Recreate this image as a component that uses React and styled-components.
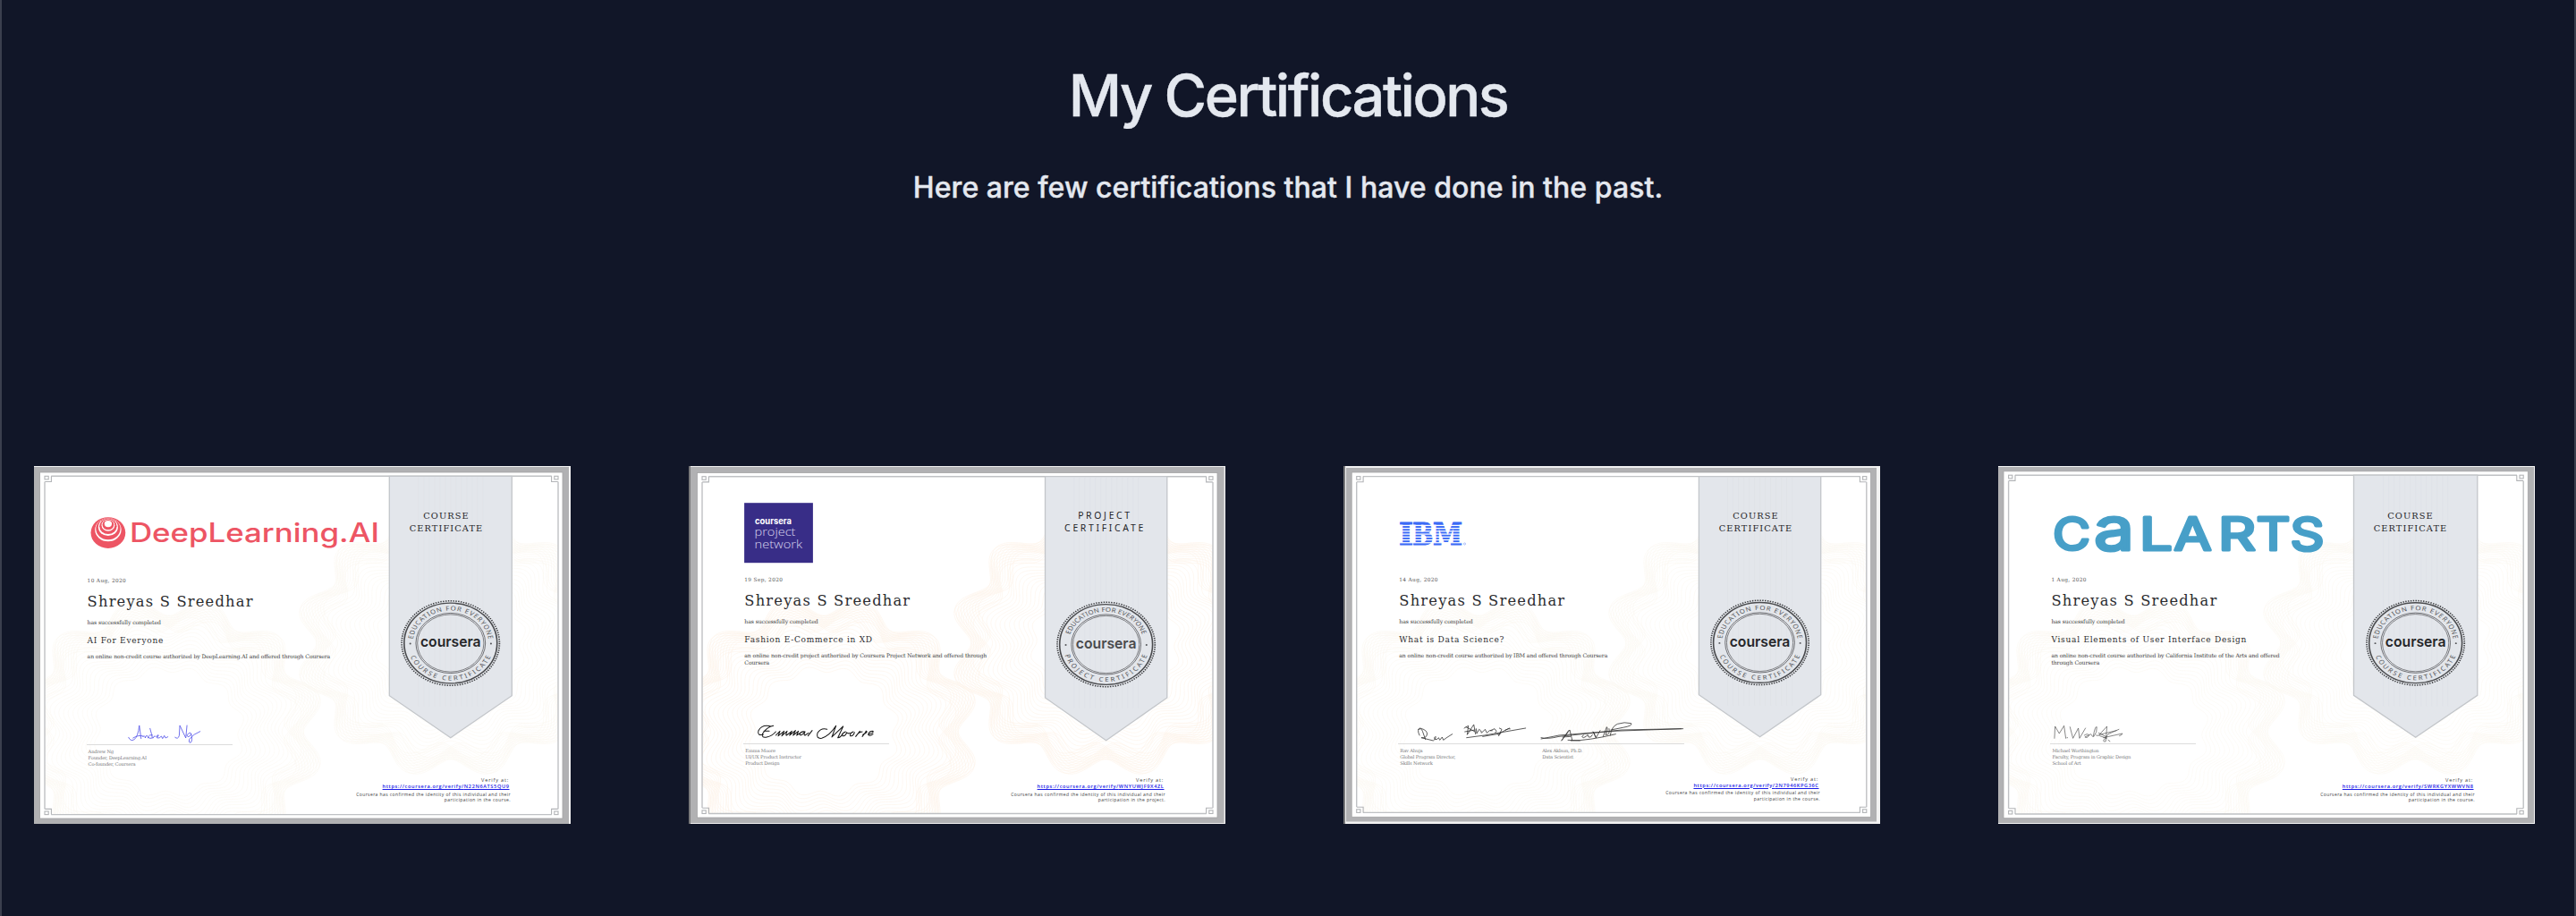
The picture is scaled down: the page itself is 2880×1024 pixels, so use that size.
import React from "react";
import styled, { createGlobalStyle } from "styled-components";

const GlobalStyle = createGlobalStyle`
  body { margin: 0; background: #111628; }
`;

const Page = styled.main`
  box-sizing: border-box;
  height: 1024px;
  padding-top: 67px;
  background: #111628;
  border-left: 2px solid #3b3f4e;
  border-right: 2px solid #3b3f4e;
  color: #e4e8ef;
  font-family: Inter, "Liberation Sans", sans-serif;
`;

const Heading = styled.h1`
  margin: 0;
  font-size: 65px;
  line-height: 80px;
  font-weight: 500;
  letter-spacing: -2.5px;
  text-align: center;
  -webkit-text-stroke: 0.4px currentColor;
`;

const Subheading = styled.p`
  margin: 43px 0 0;
  font-size: 32px;
  line-height: 40px;
  font-weight: 500;
  letter-spacing: 0.05px;
  text-align: center;
  -webkit-text-stroke: 0.4px currentColor;
`;

const Gallery = styled.section`
  display: flex;
  gap: 132px;
  margin-top: 291px;
  padding-left: 36px;
`;

const Frame = styled.article`
  box-sizing: border-box;
  position: relative;
  flex: none;
  width: 600px;
  height: 400px;
  padding: 7px 8px 6px 0;
  overflow: hidden;
  background: #fff;
  color: #3c3d40;
  font-family: "DejaVu Serif", serif;
`;

const Artwork = styled.svg`
  position: absolute;
  inset: 0;
  width: 600px;
  height: 400px;
`;

const Sheet = styled.div`
  position: relative;
  display: grid;
  grid-template-columns: 397px 137px;
  grid-template-rows: ${(p) => 341 + p.$footerShift}px auto;
`;

const Details = styled.div`
  display: flex;
  flex-direction: column;
  padding-left: ${(p) => p.$x}px;
`;

const Logo = styled.svg`
  flex: none;
  display: block;
  width: 337px;
  height: 115px;
  overflow: visible;
`;

const IssueDate = styled.time`
  margin-top: ${(p) => p.$shift}px;
  font-size: 5.8px;
  line-height: 10px;
  letter-spacing: 0.35px;
  color: #555;
`;

const Holder = styled.h2`
  margin: 8px 0 0;
  font-size: 16.3px;
  line-height: 22px;
  font-weight: 400;
  letter-spacing: 1.2px;
  color: #2b2c2f;
  white-space: nowrap;
`;

const Small = styled.p`
  margin: 7px 0 0;
  font-size: 6.2px;
  line-height: 10px;
  letter-spacing: -0.12px;
`;

const Title = styled.h3`
  margin: 7.5px 0 0;
  font-size: 9px;
  line-height: 14px;
  font-weight: 400;
  letter-spacing: 0.75px;
  color: #2b2c2f;
  white-space: nowrap;
`;

const Description = styled.p`
  height: 17px;
  margin: 7.5px 0 0;
  font-size: 6.1px;
  line-height: 8.3px;
  letter-spacing: -0.08px;
  white-space: pre;
`;

const Signers = styled.div`
  display: flex;
  margin: 59.5px 0 0 -1px;
`;

const Signer = styled.div`
  flex: none;
  width: ${(p) => p.$width}px;
`;

const Signature = styled.svg`
  display: block;
  width: 100%;
  height: 25px;
  overflow: visible;
  border-bottom: 1px solid #dcdcdc;
  fill: none;
  stroke-linecap: round;
  stroke-linejoin: round;
`;

const SignerText = styled.p`
  margin: 4px 0 0 2px;
  font-size: 5.2px;
  line-height: 7px;
  letter-spacing: -0.18px;
  color: #77787a;
  white-space: pre;
`;

const RibbonLabel = styled.div`
  box-sizing: border-box;
  padding: 42px ${(p) => (p.$sans ? 0 : 9)}px 0 0;
  font-family: ${(p) => (p.$sans ? '"Noto Sans", sans-serif' : "inherit")};
  font-size: ${(p) => (p.$sans ? 10.4 : 9.8)}px;
  line-height: 13.5px;
  letter-spacing: ${(p) => (p.$sans ? 2.7 : 1.1)}px;
  text-align: center;
  color: #232427;
`;

const Verification = styled.footer`
  grid-column: 1 / -1;
  display: flex;
  flex-direction: column;
  align-items: flex-end;
  padding-right: 1px;
  font-family: "Open Sans", "Noto Sans", sans-serif;
  font-size: 5.6px;
  line-height: 7px;
  white-space: pre;
`;

const VerifyLabel = styled.span`
  padding-right: 2px;
  letter-spacing: 0.8px;
`;

const VerifyLink = styled.a`
  padding-right: 1.5px;
  line-height: 6.5px;
  font-weight: 600;
  letter-spacing: 0.62px;
  color: #1a1ae6;
  text-decoration: underline;
`;

const FinePrint = styled.p`
  margin: 2px 0 0;
  font-size: 5px;
  line-height: 6.8px;
  letter-spacing: 0.42px;
  text-align: right;
`;

/* One closed twelve-lobed curve of the security pattern. */
function rosette(cx, cy, radius, depth, phase) {
  let d = "";
  for (let i = 0; i <= 288; i += 1) {
    const a = (i / 288) * Math.PI * 2;
    const r = radius * (1 - depth * Math.cos(12 * a + phase));
    const x = cx + Math.sin(a) * r * 1.157;
    const y = cy - Math.cos(a) * r;
    d += `${i ? "L" : "M"}${x.toFixed(1)} ${y.toFixed(1)}`;
  }
  return `${d}Z`;
}

function Rosette({ cx, cy, color }) {
  const curves = [];
  for (let i = 0; i < 9; i += 1) {
    curves.push(rosette(cx, cy, 140 - i * 2.4, 0.075, 0.15 + i * 0.1));
    curves.push(rosette(cx, cy, 140 - i * 2.4, 0.075, -0.15 - i * 0.1));
  }
  for (let i = 0; i < 13; i += 1) {
    curves.push(rosette(cx, cy, 118 - i * 4, 0.075 - i * 0.002, Math.sin(i / 2.5) * 0.5));
  }
  return (
    <g fill="none" stroke={color} strokeWidth="0.55">
      {curves.map((d) => (
        <path key={d} d={d} />
      ))}
    </g>
  );
}

function Seal({ id, cx, cy, lower, old }) {
  return (
    <g transform={`translate(${cx} ${cy}) scale(1.157 1)`} fill="none" stroke="#4a4b4e">
      <circle r="47.2" strokeWidth="1.5" strokeDasharray="1.25 1.216" stroke="#3d3e41" />
      <circle r="44.9" strokeWidth="1.4" />
      <circle r="33.6" strokeWidth="0.7" />
      <circle r="32.1" strokeWidth="0.6" />
      <path id={`${id}-up`} d="M-36.6 0A36.6 36.6 0 0 1 36.6 0" stroke="none" />
      <path id={`${id}-down`} d="M-41.6 0A41.6 41.6 0 0 0 41.6 0" stroke="none" />
      <g fill="#55565a" stroke="none" fontFamily="Noto Sans, sans-serif" fontSize="6.8" textAnchor="middle">
        <text textLength={old ? 92 : 106}>
          <textPath href={`#${id}-up`} startOffset="50%" textLength={old ? 92 : 106}>EDUCATION FOR EVERYONE</textPath>
        </text>
        <text textLength={old ? 106 : 100}>
          <textPath href={`#${id}-down`} startOffset="50%" textLength={old ? 106 : 100}>{lower}</textPath>
        </text>
        <circle cx="-39" cy="0.5" r="0.9" />
        <circle cx="39" cy="0.5" r="0.9" />
      </g>
      <text
        x="0"
        y="4.2"
        fill={old ? "#4a4b4e" : "#26272a"}
        stroke="none"
        fontFamily="Inter, sans-serif"
        fontWeight="600"
        fontSize="16.5"
        textAnchor="middle"
        textLength="58.5"
        lengthAdjust="spacingAndGlyphs"
      >
        coursera
      </text>
    </g>
  );
}

function Corner({ x, y, sx, sy }) {
  return (
    <g transform={`translate(${x} ${y}) scale(${sx} ${sy})`} fill="none" stroke="#b2b4b7" strokeWidth="1.1">
      <rect x="0" y="0" width="4.2" height="3.6" />
      <path d="M7.4 0V6.2H0.2" />
    </g>
  );
}

function CertificateArt({ cert }) {
  const { id, frame: f, inner: n, ribbon: r, pattern } = cert;
  const mid = (r.l + r.r) / 2;
  return (
    <Artwork viewBox="0 0 600 400" aria-hidden="true">
      <defs>
        <clipPath id={`${id}-clip`}>
          <rect x={n.l} y={n.t} width={n.r - n.l} height={n.b - n.t} />
        </clipPath>
      </defs>
      <rect width="600" height="400" fill={cert.edge} />
      <rect x={cert.rim[0]} y={cert.rim[1]} width={cert.rim[2] - cert.rim[0]} height={cert.rim[3] - cert.rim[1]} fill="#b1b1b3" />
      <rect x={f.l} y={f.t} width={f.r - f.l} height={f.b - f.t} fill="#fff" stroke="#a3a3a5" strokeWidth="0.8" />
      {cert.darkLeft && <rect width="2" height="400" fill="#79797b" />}
      <g clipPath={`url(#${id}-clip)`}>
        <Rosette cx={466} cy={198} color={pattern} />
        <Rosette cx={151} cy={297} color={pattern} />
      </g>
      <path
        d={`M${n.l + 7.2} ${n.t}H${n.r - 7.2}M${n.l + 7.2} ${n.b}H${n.r - 7.2}M${n.l} ${n.t + 6.2}V${n.b - 6.2}M${n.r} ${n.t + 6.2}V${n.b - 6.2}`}
        fill="none"
        stroke="#bfc1c4"
        strokeWidth="1.4"
      />
      <Corner x={n.l} y={n.t} sx={1} sy={1} />
      <Corner x={n.r} y={n.t} sx={-1} sy={1} />
      <Corner x={n.l} y={n.b} sx={1} sy={-1} />
      <Corner x={n.r} y={n.b} sx={-1} sy={-1} />
      <path
        d={`M${r.l} ${n.t}H${r.r}V${r.shoulder}L${mid} ${r.tip}L${r.l} ${r.shoulder}Z`}
        fill="#e3e6eb"
        stroke="#c3c6ca"
        strokeWidth="1.3"
      />
      <path
        d={Array.from({ length: 13 }, (_, i) => `M${mid - 36 + i * 6} ${n.t + 1}V${r.shoulder + 12}`).join("")}
        stroke="#dfe2e7"
        strokeWidth="0.8"
      />
      <Seal id={id} cx={mid} cy={cert.sealY} lower={cert.sealText} old={cert.oldSeal} />
    </Artwork>
  );
}

function DeepLearningLogo() {
  return (
    <g>
      <g transform="translate(82.5 74.6) scale(1.12 1)">
        <circle r="17.3" fill="#ed5564" />
        <circle cy="-3.4" r="13.1" fill="#fff" />
        <circle cy="-4.5" r="12.2" fill="#ed5564" />
        <circle cy="-6.4" r="9.8" fill="#fff" />
        <circle cy="-7.3" r="8.7" fill="#ed5564" />
        <circle cy="-8.4" r="6.6" fill="#fff" />
        <circle cy="-9" r="5.7" fill="#ed5564" />
        <circle cy="-10" r="3.7" fill="#fff" />
      </g>
      <text x="106.5" y="85" fill="#ed5564" fontFamily="Inter, sans-serif" fontSize="29.5" fontWeight="500" textLength="279" lengthAdjust="spacingAndGlyphs">
        DeepLearning.AI
      </text>
    </g>
  );
}

function ProjectNetworkLogo() {
  return (
    <g>
      <rect x="62.4" y="41.2" width="76.8" height="67" fill="#382d87" />
      <text x="74.3" y="65" fill="#fff" fontFamily="Inter, sans-serif" fontSize="9.8" fontWeight="700" textLength="41" lengthAdjust="spacingAndGlyphs">coursera</text>
      <g fill="#d9d6ee" fontFamily="Open Sans, sans-serif" fontSize="13.6" fontWeight="300">
        <text x="73.8" y="78" textLength="46" lengthAdjust="spacingAndGlyphs">project</text>
        <text x="73.8" y="92" textLength="53.5" lengthAdjust="spacingAndGlyphs">network</text>
      </g>
    </g>
  );
}

function IbmLogo() {
  return (
    <g>
      <g fill="#3b6af6" stroke="#3b6af6" strokeWidth="1.2" fontFamily="DejaVu Serif, serif" fontSize="33.2" fontWeight="700">
        <text x="62.2" y="88.2" textLength="16" lengthAdjust="spacingAndGlyphs">I</text>
        <text x="77.6" y="88.2" textLength="23" lengthAdjust="spacingAndGlyphs">B</text>
        <text x="100.2" y="88.2" textLength="33" lengthAdjust="spacingAndGlyphs">M</text>
      </g>
      {Array.from({ length: 7 }, (_, i) => (
        <rect key={i} x="60" y={65.8 + i * 3.22} width="76" height="1.25" fill="#fff" />
      ))}
      <circle cx="135.8" cy="87" r="1.1" fill="none" stroke="#7d9af5" strokeWidth="0.6" />
    </g>
  );
}

const calArtsLetters = [
  ["C", 82.5, 42, 50.5],
  ["a", 130, 45, 67],
  ["L", 177, 37, 50.5],
  ["A", 218, 42, 50.5],
  ["R", 267.5, 42, 50.5],
  ["T", 308, 38, 50.5],
  ["S", 346, 38, 50.5],
];

function CalArtsLogo() {
  return (
    <g fill="#479fc8" stroke="#479fc8" strokeWidth="3.2" strokeLinejoin="round" fontFamily="Inter, sans-serif" fontWeight="400" textAnchor="middle">
      {calArtsLetters.map(([letter, x, width, size]) => (
        <text key={letter} x={x} y="93.8" fontSize={size} textLength={width} lengthAdjust="spacingAndGlyphs">
          {letter}
        </text>
      ))}
    </g>
  );
}

const strokes = {
  andrew: {
    at: "translate(42 279)",
    color: "#5a5aea",
    width: 2.6,
    d: "M190 70q6 14 18 8q14-10 18-48l6 44M205 72q20-12 34-6M238 68q6-8 8 4l2-6q6-6 8 6M262 40q6 20 8 32q-12 4-14-4q4-8 14-6M272 72q4-10 8-6M284 68q10-2 6-6q-8 0-4 10q8 2 14-6l4 8l6-10l4 8l8-4M346 70q10 8 14-6l2-34l20 42l4-42M386 62q12-14 14-2q-10 14-14 4M400 58q6 24-2 30q-8 0-4-12q14-18 36-26",
  },
  emma: {
    at: "translate(55 279)",
    color: "#151515",
    width: 3.1,
    d: "M112 36q-30-8-42 14q-6 18 16 14M120 34q-22 4-36 26q-6 16 14 12q18-4 30-18M88 52h18M128 66l14-14l-6 16l20-16l-8 16l18-16q-6 14-2 14l18-14l-8 14l20-16l-8 16l18-14l-6 14l12-8M226 54q-14-2-18 8q2 10 18-8q-6 12 0 12l12-8M250 50l-14 18M300 46q-20-6-32 12q-6 20 14 18q26-8 48-42l-14 38l38-36l-18 38q10 0 16-14M362 54q-14 6-10 14q10 2 14-12q4 6 10 2M388 54q-14 6-10 14q10 2 14-12M410 52l-14 18q8-14 22-16M432 52l-14 18M420 64q20-10 10-12M440 62q18-4 14-10q-14 0-16 12q6 6 16-2",
  },
  rav: {
    at: "translate(48 269)",
    color: "#2b2b2b",
    width: 2.3,
    d: "M108 76q10-6 14 6l10 28M112 96q-10-20 2-24q30 8 22 26q-6 10-18 6l40 10q12-8 8-14q-8 4-2 10q8 2 12-6l4 8l8-10l4 10q10-8 30-20M262 72l14-8l-4 30l22-34l6 32M264 84l34-6M268 68l30 16M302 74l2 16l8-14q8 4 8 12l12-12l6 12q8-12 18-8M350 80l14-6l6 8l-4 6M380 72l8 4l-10 22q-8-4 16-16l20-10M400 78q12-6 16-4M270 104l60-8l138-24M324 100l60-10",
  },
  alex: {
    at: "translate(48 269)",
    color: "#2b2b2b",
    width: 2.3,
    d: "M520 108l60-12l180-14l236-8M520 104q20 6 60-4l210-22l200-4M588 114l28-36l8 34M590 112l22-32M592 102l26-2M662 96q-10 4 0 8q12-4 14-10q2 12 10 8l6-8M694 84l10 20l14-24M696 86l8 18M728 100l12-32q6 6-4 26q16 2 12-20M752 96q4-30 24-38q24-8 46-2q6 8-28 14l-40 8M620 114q60 0 150-22M610 112l40 2",
  },
  michael: {
    at: "translate(46 279)",
    color: "#4b4b4b",
    width: 2,
    d: "M52 76l2-40l14 24l16-26l6 42M94 74h2M104 38l10 38l18-34l4 34l20-34M152 66q12-8 16 0q-6 12-14 6l20-10l6 8M182 70q6-36 12-32q2 18-10 32M192 66q10 4 14-6l22-24l-4 50q-6 4-8-2l16-22l36-16M202 64l58-14M216 74l64-14q-2 6-10 8M204 68l24 8M200 58l28 14M232 82l6 4",
  },
};

const base = { sealText: "COURSE CERTIFICATE", label: ["COURSE", "CERTIFICATE"], pattern: "#fcf8f1", footerShift: 0, shift: 1 };

const certificates = [
  {
    ...base,
    id: "ai",
    x: 59.6,
    edge: "#f4f4f4",
    rim: [0, 1, 598, 400],
    frame: { l: 6.6, t: 7, r: 591, b: 394 },
    inner: { l: 12, t: 11.3, r: 586, b: 389.6 },
    ribbon: { l: 397.3, r: 534.3, shoulder: 256.7, tip: 303.7 },
    sealY: 198,
    logo: DeepLearningLogo,
    date: "10 Aug, 2020",
    title: "AI For Everyone",
    description: "an online non-credit course authorized by DeepLearning.AI and offered through Coursera",
    signers: [{ mark: "andrew", text: "Andrew Ng\nFounder, DeepLearning.AI\nCo-founder, Coursera", width: 163 }],
    code: "N22N6ATS5QU9",
    kind: "course",
  },
  {
    ...base,
    id: "xd",
    x: 62.3,
    edge: "#f0f0f0",
    darkLeft: true,
    rim: [0, 1, 598.6, 399],
    frame: { l: 9.4, t: 7.5, r: 591, b: 393 },
    inner: { l: 15, t: 11.7, r: 586, b: 388.5 },
    ribbon: { l: 398.5, r: 534.8, shoulder: 259, tip: 306.7 },
    sealY: 199.5,
    sealText: "PROJECT CERTIFICATE",
    oldSeal: true,
    pattern: "#fdf3e8",
    shift: 0,
    label: ["PROJECT", "CERTIFICATE"],
    logo: ProjectNetworkLogo,
    date: "19 Sep, 2020",
    title: "Fashion E-Commerce in XD",
    description: "an online non-credit project authorized by Coursera Project Network and offered through\nCoursera",
    signers: [{ mark: "emma", text: "Emma Moore\nUI/UX Product Instructor\nProduct Design", width: 163 }],
    code: "WNYUWJF9X4ZL",
    kind: "project",
  },
  {
    ...base,
    id: "ds",
    x: 62.3,
    edge: "#f2f2f2",
    darkLeft: true,
    rim: [3, 2, 596, 397.5],
    frame: { l: 9.2, t: 7, r: 589.6, b: 392.3 },
    inner: { l: 14.7, t: 11.6, r: 584.8, b: 387.4 },
    ribbon: { l: 397.4, r: 533.7, shoulder: 255.7, tip: 302.7 },
    sealY: 197.4,
    footerShift: -1.5,
    shift: 0,
    logo: IbmLogo,
    date: "14 Aug, 2020",
    title: "What is Data Science?",
    description: "an online non-credit course authorized by IBM and offered through Coursera",
    signers: [
      { mark: "rav", text: "Rav Ahuja\nGlobal Program Director,\nSkills Network", width: 159 },
      { mark: "alex", text: "Alex Aklson, Ph.D.\nData Scientist", width: 161 },
    ],
    code: "2N7946KPG36C",
    kind: "course",
  },
  {
    ...base,
    id: "ui",
    x: 59.4,
    edge: "#f4f4f4",
    rim: [0, 1, 599, 399],
    frame: { l: 6, t: 5.8, r: 592.3, b: 393.7 },
    inner: { l: 11.6, t: 10.2, r: 587.2, b: 389 },
    ribbon: { l: 397.5, r: 535.8, shoulder: 256.3, tip: 303.3 },
    sealY: 197.7,
    shift: 0,
    logo: CalArtsLogo,
    date: "1 Aug, 2020",
    title: "Visual Elements of User Interface Design",
    description: "an online non-credit course authorized by California Institute of the Arts and offered\nthrough Coursera",
    signers: [{ mark: "michael", text: "Michael Worthington\nFaculty, Program in Graphic Design\nSchool of Art", width: 163 }],
    code: "SWRKGYXWWVN8",
    kind: "course",
  },
];

function SignerBlock({ signer, left }) {
  const s = strokes[signer.mark];
  return (
    <Signer $width={signer.width}>
      <Signature viewBox={`${left} 285 ${signer.width} 25`}>
        <g transform={`${s.at} scale(0.3333)`} stroke={s.color} strokeWidth={s.width}>
          <path d={s.d} />
        </g>
      </Signature>
      <SignerText>{signer.text}</SignerText>
    </Signer>
  );
}

function Certificate({ cert }) {
  const LogoArt = cert.logo;
  return (
    <Frame>
      <CertificateArt cert={cert} />
      <Sheet $footerShift={cert.footerShift}>
        <Details $x={cert.x}>
          <Logo viewBox={`${cert.x} 7 337 115`}>
            <LogoArt />
          </Logo>
          <IssueDate $shift={cert.shift}>{cert.date}</IssueDate>
          <Holder>Shreyas S Sreedhar</Holder>
          <Small>has successfully completed</Small>
          <Title>{cert.title}</Title>
          <Description>{cert.description}</Description>
          <Signers>
            {cert.signers.map((signer, i) => (
              <SignerBlock key={signer.mark} signer={signer} left={cert.x - 1 + i * 159} />
            ))}
          </Signers>
        </Details>
        <RibbonLabel $sans={cert.oldSeal}>
          {cert.label[0]}
          <br />
          {cert.label[1]}
        </RibbonLabel>
        <Verification>
          <VerifyLabel>Verify at:</VerifyLabel>
          <VerifyLink>https://coursera.org/verify/{cert.code}</VerifyLink>
          <FinePrint>{`Coursera has confirmed the identity of this individual and their\nparticipation in the ${cert.kind}.`}</FinePrint>
        </Verification>
      </Sheet>
    </Frame>
  );
}

export default function App() {
  return (
    <Page>
      <GlobalStyle />
      <Heading>My Certifications</Heading>
      <Subheading>Here are few certifications that I have done in the past.</Subheading>
      <Gallery>
        {certificates.map((cert) => (
          <Certificate key={cert.id} cert={cert} />
        ))}
      </Gallery>
    </Page>
  );
}
